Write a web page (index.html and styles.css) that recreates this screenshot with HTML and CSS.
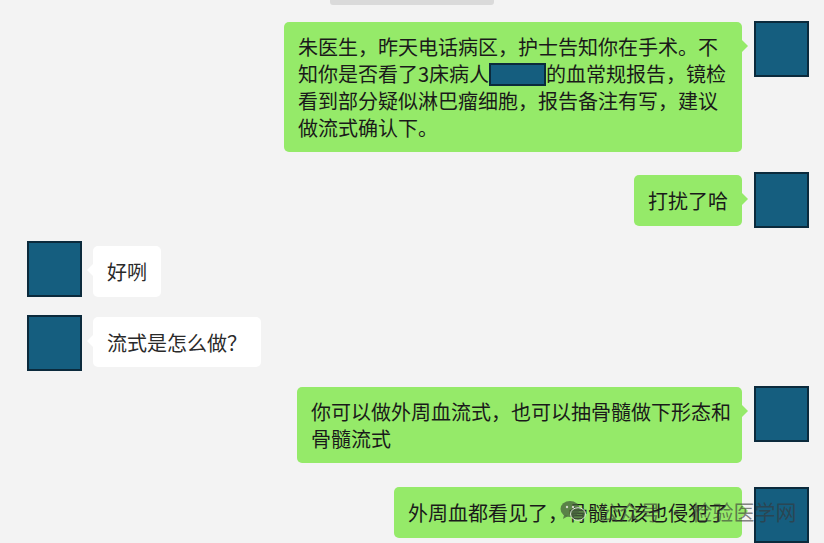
FILE: index.html
```html
<!DOCTYPE html>
<html lang="zh">
<head>
<meta charset="utf-8">
<title>聊天记录</title>
<link rel="stylesheet" href="styles.css">
</head>
<body>
<div class="chat">
  <div class="stamp"></div>

  <div class="row me r1">
    <div class="bubble green">朱医生，昨天电话病区，护士告知你在手术。不知你是否看了3床病人<span class="redact"></span>的血常规报告，镜检看到部分疑似淋巴瘤细胞，报告备注有写，建议做流式确认下。</div>
    <div class="avatar"></div>
  </div>

  <div class="row me r2">
    <div class="bubble green">打扰了哈</div>
    <div class="avatar"></div>
  </div>

  <div class="row other r3">
    <div class="avatar"></div>
    <div class="bubble white">好咧</div>
  </div>

  <div class="row other r4">
    <div class="avatar"></div>
    <div class="bubble white">流式是怎么做？</div>
  </div>

  <div class="row me r5">
    <div class="bubble green">你可以做外周血流式，也可以抽骨髓做下形态和骨髓流式</div>
    <div class="avatar"></div>
  </div>

  <div class="row me r6">
    <div class="bubble green">外周血都看见了，骨髓应该也侵犯了</div>
    <div class="avatar"></div>
  </div>

  <div class="watermark">
    <svg class="wm-icon" viewBox="0 0 26 22" width="26" height="22">
      <ellipse cx="10" cy="9" rx="9.5" ry="8" fill="currentColor"/>
      <path d="M4 15 L3 19 L8 16 Z" fill="currentColor"/>
      <ellipse cx="18" cy="14" rx="7.5" ry="6.3" fill="currentColor" stroke="#dfe8d8" stroke-width="1"/>
      <circle cx="7" cy="7" r="1.2" fill="#cfd8c8"/>
      <circle cx="13" cy="7" r="1.2" fill="#cfd8c8"/>
    </svg>
    <span class="wm-text">公众号 · 检验医学网</span>
  </div>
</div>
</body>
</html>
```

FILE: styles.css
```css
* {
  box-sizing: border-box;
}

html, body {
  margin: 0;
  padding: 0;
  background: #f3f3f3;
  overflow: hidden;
}

body {
  width: 824px;
  height: 543px;
  font-family: "Noto Sans CJK SC", "Noto Sans", sans-serif;
}

.chat {
  position: relative;
  display: flex;
  flex-direction: column;
  height: 543px;
}

.stamp {
  align-self: center;
  width: 164px;
  height: 6px;
  background: #dadada;
  border-radius: 0 0 3px 3px;
}

.row {
  display: flex;
  align-items: flex-start;
}

.row.me {
  justify-content: flex-end;
  padding-right: 15px;
}

.row.other {
  justify-content: flex-start;
  padding-left: 27px;
}

.r1 { margin-top: 16px; }
.r2 { margin-top: 20px; }
.r3 { margin-top: 13px; }
.r4 { margin-top: 18px; }
.r5 { margin-top: 15px; }
.r6 { margin-top: 24px; }

.avatar {
  flex: none;
  width: 55px;
  height: 56px;
  background: #155e7f;
  border: 2px solid #0b2a3c;
}

.bubble {
  position: relative;
  max-width: 462px;
  margin-top: 1px;
  padding: 11px 14px 11px;
  border-radius: 5px;
  font-size: 20px;
  line-height: 27px;
  color: #1a1a1a;
}

.r1 .bubble {
  width: 458px;
}

.r5 .bubble {
  width: 445px;
  padding-right: 10px;
}

.me .bubble {
  margin-right: 12px;
}

.other .bubble {
  margin-left: 11px;
}

.bubble.green {
  background: #95ea69;
}

.bubble.white {
  background: #ffffff;
  color: #2a2a2a;
}

.bubble::after {
  content: "";
  position: absolute;
  top: 18px;
  border-top: 6px solid transparent;
  border-bottom: 6px solid transparent;
}

.me .bubble::after {
  right: -6px;
  border-left: 6px solid #95ea69;
}

.other .bubble::after {
  left: -6px;
  border-right: 6px solid #ffffff;
}

.r2 .bubble,
.r3 .bubble {
  margin-top: 3px;
  padding-top: 12px;
  padding-bottom: 12px;
}

.r3 .bubble {
  margin-top: 5px;
}

.r4 .bubble {
  margin-top: 2px;
  padding-top: 12px;
  padding-bottom: 11px;
}

.r6 .bubble {
  margin-top: 0;
  padding-top: 12px;
  padding-bottom: 12px;
}

.redact {
  display: inline-block;
  width: 57px;
  height: 23px;
  vertical-align: -4px;
  background: #155e7f;
  border: 2px solid #0b2a3c;
}

.watermark {
  position: absolute;
  left: 560px;
  top: 497px;
  display: flex;
  align-items: center;
  gap: 12px;
  color: rgba(55, 55, 55, 0.62);
  pointer-events: none;
}

.wm-icon {
  color: rgba(70, 95, 60, 0.75);
}

.wm-text {
  font-size: 21px;
  line-height: 28px;
}
```
